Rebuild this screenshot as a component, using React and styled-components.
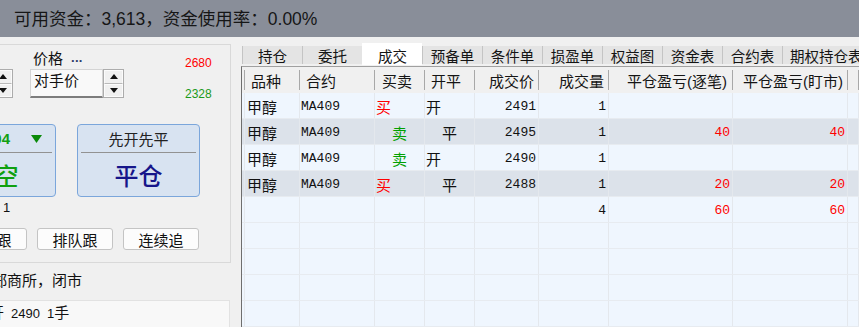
import React from "react";
import styled, { createGlobalStyle } from "styled-components";

const GlobalStyle = createGlobalStyle`
  html, body { margin: 0; padding: 0; background: #f0f0f0; }
  body { font-family: "Liberation Sans", "Noto Sans CJK SC", sans-serif; color: #111; }
  #root { width: 859px; height: 327px; overflow: hidden; }
  * { box-sizing: border-box; }
`;

const Page = styled.div`
  width: 859px;
  height: 327px;
  display: flex;
  flex-direction: column;
  overflow: hidden;
`;

const TopBar = styled.div`
  height: 37px;
  flex: none;
  background: #898e99;
  display: flex;
  align-items: center;
  padding: 0 0 3px 14px;
  font-size: 17.5px;
  color: #161616;
  white-space: nowrap;
`;

const Main = styled.div`
  flex: 1;
  display: flex;
  min-height: 0;
`;

/* ---------- left column ---------- */
const LeftCol = styled.div`
  width: 241px;
  flex: none;
  overflow: hidden;
  display: flex;
  flex-direction: column;
`;

const Panel = styled.div`
  flex: none;
  align-self: flex-start;
  margin: 7px 0 0 -72px;
  width: 303px;
  height: 219px;
  border: 1px solid #d9d9d9;
  padding-top: 3px;
  display: flex;
  flex-direction: column;
`;

const FieldRow = styled.div`
  height: 50px;
  display: flex;
  align-items: flex-start;
  flex: none;
`;

const FieldGroup = styled.div`
  display: flex;
  flex-direction: column;
  margin-left: ${(p) => p.$ml}px;
`;

const FieldLabel = styled.div`
  height: 18px;
  margin-bottom: 3px;
  padding-left: 3px;
  display: flex;
  align-items: center;
  font-size: 15px;
  white-space: nowrap;
`;

const Dots = styled.span`
  margin-left: 8px;
  font-size: 13px;
  font-weight: bold;
  color: #2c3d6b;
  letter-spacing: 0.3px;
`;

const InputRow = styled.div`
  display: flex;
  height: 29px;
`;

const ComboBox = styled.div`
  width: ${(p) => p.$w}px;
  height: 29px;
  background: #f9f9f9;
  border: 1px solid #d4d4d4;
  border-bottom: 2px solid #7d7d7d;
  padding: 1px 0 0 3px;
  font-size: 15px;
  line-height: 19px;
  white-space: nowrap;
`;

const Spinner = styled.div`
  width: 21px;
  height: 29px;
  border: 1px solid #acacac;
  display: flex;
  flex-direction: column;
  background: #f0f0f0;
`;

const SpinBtn = styled.div`
  flex: 1;
  display: flex;
  align-items: center;
  justify-content: center;
  border: 1px solid #fbfbfb;
  border-bottom-color: ${(p) => (p.$top ? "#b9b9b9" : "#fbfbfb")};
`;

const PriceCol = styled.div`
  margin-left: 61px;
  padding-top: 8px;
  display: flex;
  flex-direction: column;
  gap: 16px;
  font-size: 12px;
  line-height: 15px;
`;

const PriceText = styled.div`
  color: ${(p) => p.$color};
`;

const BigRow = styled.div`
  display: flex;
  gap: 21px;
  margin: 26px 0 0 4px;
  flex: none;
`;

const BigButton = styled.div`
  width: 123px;
  height: 73px;
  border: 1px solid #7ba6db;
  border-radius: 4px;
  background: #d8e3f1;
  padding: 0 3px;
  display: flex;
  flex-direction: column;
`;

const BigTop = styled.div`
  height: 28px;
  flex: none;
  display: flex;
  align-items: center;
  justify-content: ${(p) => (p.$end ? "flex-end" : "center")};
  padding-right: ${(p) => (p.$end ? 10 : 0)}px;
  gap: 21px;
  border-bottom: 1px solid #929292;
  font-size: 15px;
  color: #222;
`;

const BigPrice = styled.span`
  font-weight: bold;
  color: #12a012;
`;

const BigMain = styled.div`
  flex: 1;
  display: flex;
  align-items: center;
  justify-content: center;
  font-size: 24px;
  font-weight: 500;
  color: ${(p) => p.$color};
  white-space: nowrap;
`;

const QtyLine = styled.div`
  margin-top: 3px;
  height: 16px;
  line-height: 16px;
  font-size: 13px;
  padding-left: 74px;
  flex: none;
`;

const SmallRow = styled.div`
  display: flex;
  gap: 10px;
  margin: 12px 0 0 22px;
  flex: none;
`;

const SmallButton = styled.button`
  width: 76px;
  height: 22px;
  flex: none;
  padding: 0;
  border: 1px solid #c4c4c4;
  border-radius: 3px;
  background: #fcfcfc;
  font-family: inherit;
  font-size: 15px;
  color: #111;
  display: flex;
  align-items: center;
  justify-content: center;
`;

const StatusLine = styled.div`
  margin: 9px 0 0 -8px;
  height: 18px;
  line-height: 18px;
  font-size: 15px;
  white-space: nowrap;
  flex: none;
`;

const OrderBox = styled.div`
  margin: 10px 0 0 -40px;
  width: 270px;
  flex: 1;
  background: #f8f8f8;
  border: 1px solid #e2e2e2;
  border-bottom: none;
  padding: 3px 0 0 13px;
  display: flex;
  align-items: baseline;
  align-self: flex-start;
  height: 27px;
  gap: 7px;
  font-size: 15px;
  line-height: 18px;
  white-space: nowrap;
`;

const OrderNum = styled.span`
  font-size: 13px;
`;

/* ---------- right column ---------- */
const RightCol = styled.div`
  flex: 1;
  min-width: 0;
  display: flex;
  flex-direction: column;
  padding-top: 6px;
`;

const TabStrip = styled.div`
  height: 23px;
  flex: none;
  display: flex;
  align-items: flex-start;
  padding-left: 1px;
  white-space: nowrap;
`;

const Tab = styled.div`
  width: ${(p) => (p.$wide ? "auto" : "60px")};
  padding-left: ${(p) => (p.$wide ? 7 : 0)}px;
  padding-right: ${(p) => (p.$wide ? 7 : 0)}px;
  flex: none;
  height: ${(p) => (p.$active ? 22 : 18)}px;
  margin-top: ${(p) => (p.$active ? 0 : 3)}px;
  padding-top: ${(p) => (p.$active ? 2 : 0)}px;
  background: ${(p) => (p.$active ? "#ffffff" : "#e4e4e4")};
  border-left: 1px solid ${(p) => (p.$active ? "#ffffff" : "#c4c4c4")};
  display: flex;
  align-items: center;
  justify-content: center;
  font-size: 14.5px;
  color: #151515;
  white-space: nowrap;
`;

const Table = styled.div`
  flex: 1;
  min-height: 0;
  overflow: hidden;
  border-top: 1px solid #a0a0a0;
  border-left: 1px solid #6e6e6e;
  background: #eff6fe;
`;

const COLS = "3px 55px 75px 50px 50px 64px 70px 124px 115px 1fr";

const HeaderRow = styled.div`
  display: grid;
  grid-template-columns: ${COLS};
  height: 26px;
  background: #f0f0f0;
`;

const HeaderCell = styled.div`
  position: relative;
  display: flex;
  align-items: center;
  justify-content: ${(p) => (p.$right ? "flex-end" : "flex-start")};
  padding: ${(p) => (p.$right ? `0 ${p.$pad ?? 6}px 0 0` : `0 0 0 ${p.$pad ?? 6}px`)};
  font-size: 15px;
  color: #151515;
  white-space: nowrap;
  overflow: hidden;
  &::after {
    content: "";
    position: absolute;
    right: 0;
    top: 3px;
    bottom: 3px;
    width: 1px;
    background: #a8a8a8;
  }
`;

const DataRow = styled.div`
  display: grid;
  grid-template-columns: ${COLS};
  height: 26px;
  background: ${(p) => (p.$dark ? "#dce2ea" : "#eff6fe")};
  border-bottom: 1px solid #e7ebf0;
`;

const Cell = styled.div`
  display: flex;
  align-items: center;
  justify-content: ${(p) => (p.$right ? "flex-end" : "flex-start")};
  padding: ${(p) => (p.$right ? `1px 2px 0 0` : `1px 0 0 ${p.$pad ?? 1}px`)};
  border-right: 1px solid #e4e8ed;
  font-size: ${(p) => (p.$mono ? 13 : 15)}px;
  font-family: ${(p) =>
    p.$mono
      ? `"Liberation Mono", "Noto Sans CJK SC", monospace`
      : `"Liberation Sans", "Noto Sans CJK SC", sans-serif`};
  color: ${(p) => p.$color || "#111"};
  white-space: nowrap;
  overflow: hidden;
`;

const UpArrow = () => (
  <svg width="8" height="5" viewBox="0 0 8 5">
    <polygon points="0,5 8,5 4,0" fill="#111" />
  </svg>
);
const DownArrow = () => (
  <svg width="8" height="5" viewBox="0 0 8 5">
    <polygon points="0,0 8,0 4,5" fill="#111" />
  </svg>
);
const GreenDown = () => (
  <svg width="11" height="8" viewBox="0 0 11 8">
    <polygon points="0,0 11,0 5.5,8" fill="#0a8a0a" />
  </svg>
);

const SpinBox = () => (
  <Spinner>
    <SpinBtn $top>
      <UpArrow />
    </SpinBtn>
    <SpinBtn>
      <DownArrow />
    </SpinBtn>
  </Spinner>
);

const TABS = ["持仓", "委托", "成交", "预备单", "条件单", "损盈单", "权益图", "资金表", "合约表", "期权持仓表"];

const RED = "#ff0000";
const GREEN = "#00a000";

const trades = [
  { side: "买", open: "开", price: "2491", qty: "1", p1: "", p2: "" },
  { side: "卖", open: "平", price: "2495", qty: "1", p1: "40", p2: "40" },
  { side: "卖", open: "开", price: "2490", qty: "1", p1: "", p2: "" },
  { side: "买", open: "平", price: "2488", qty: "1", p1: "20", p2: "20" },
];

const EmptyRow = () => (
  <DataRow>
    {Array.from({ length: 10 }).map((_, i) => (
      <Cell key={i} />
    ))}
  </DataRow>
);

export default function App() {
  return (
    <>
      <GlobalStyle />
      <Page>
        <TopBar>可用资金：3,613，资金使用率：0.00%</TopBar>
        <Main>
          <LeftCol>
            <Panel>
              <FieldRow>
                <FieldGroup $ml={7}>
                  <FieldLabel>手数</FieldLabel>
                  <InputRow>
                    <ComboBox $w={56}>1</ComboBox>
                    <SpinBox />
                  </InputRow>
                </FieldGroup>
                <FieldGroup $ml={17}>
                  <FieldLabel>
                    价格<Dots>...</Dots>
                  </FieldLabel>
                  <InputRow>
                    <ComboBox $w={73}>对手价</ComboBox>
                    <SpinBox />
                  </InputRow>
                </FieldGroup>
                <PriceCol>
                  <PriceText $color={RED}>2680</PriceText>
                  <PriceText $color="#1a9a1a">2328</PriceText>
                </PriceCol>
              </FieldRow>
              <BigRow>
                <BigButton>
                  <BigTop $end>
                    <BigPrice>2504</BigPrice>
                    <GreenDown />
                  </BigTop>
                  <BigMain $color="#10a010">卖空</BigMain>
                </BigButton>
                <BigButton>
                  <BigTop>先开先平</BigTop>
                  <BigMain $color="#16168a">平仓</BigMain>
                </BigButton>
              </BigRow>
              <QtyLine>1</QtyLine>
              <SmallRow>
                <SmallButton>对价跟</SmallButton>
                <SmallButton>排队跟</SmallButton>
                <SmallButton>连续追</SmallButton>
              </SmallRow>
            </Panel>
            <StatusLine>郑商所，闭市</StatusLine>
            <OrderBox>
              <span>卖开</span>
              <OrderNum>2490</OrderNum>
              <span>
                <OrderNum>1</OrderNum>手
              </span>
            </OrderBox>
          </LeftCol>

          <RightCol>
            <TabStrip>
              {TABS.map((t) => (
                <Tab key={t} $active={t === "成交"} $wide={t.length > 3}>
                  {t}
                </Tab>
              ))}
            </TabStrip>
            <Table>
              <HeaderRow>
                <HeaderCell $pad={0} />
                <HeaderCell>品种</HeaderCell>
                <HeaderCell>合约</HeaderCell>
                <HeaderCell $pad={7}>买卖</HeaderCell>
                <HeaderCell>开平</HeaderCell>
                <HeaderCell $right $pad={5}>成交价</HeaderCell>
                <HeaderCell $right $pad={5}>成交量</HeaderCell>
                <HeaderCell $right $pad={6}>平仓盈亏(逐笔)</HeaderCell>
                <HeaderCell $right $pad={5}>平仓盈亏(盯市)</HeaderCell>
                <HeaderCell />
              </HeaderRow>
              {trades.map((t, i) => (
                <DataRow key={i} $dark={i % 2 === 1}>
                  <Cell />
                  <Cell $pad={2}>甲醇</Cell>
                  <Cell $mono>MA409</Cell>
                  <Cell $pad={t.side === "买" ? 1 : 17} $color={t.side === "买" ? RED : GREEN}>
                    {t.side}
                  </Cell>
                  <Cell $pad={t.open === "开" ? 1 : 17}>{t.open}</Cell>
                  <Cell $mono $right>{t.price}</Cell>
                  <Cell $mono $right>{t.qty}</Cell>
                  <Cell $mono $right $color={RED}>{t.p1}</Cell>
                  <Cell $mono $right $color={RED}>{t.p2}</Cell>
                  <Cell />
                </DataRow>
              ))}
              <DataRow>
                <Cell />
                <Cell />
                <Cell />
                <Cell />
                <Cell />
                <Cell />
                <Cell $mono $right>4</Cell>
                <Cell $mono $right $color={RED}>60</Cell>
                <Cell $mono $right $color={RED}>60</Cell>
                <Cell />
              </DataRow>
              <EmptyRow />
              <EmptyRow />
              <EmptyRow />
              <EmptyRow />
              <EmptyRow />
            </Table>
          </RightCol>
        </Main>
      </Page>
    </>
  );
}
